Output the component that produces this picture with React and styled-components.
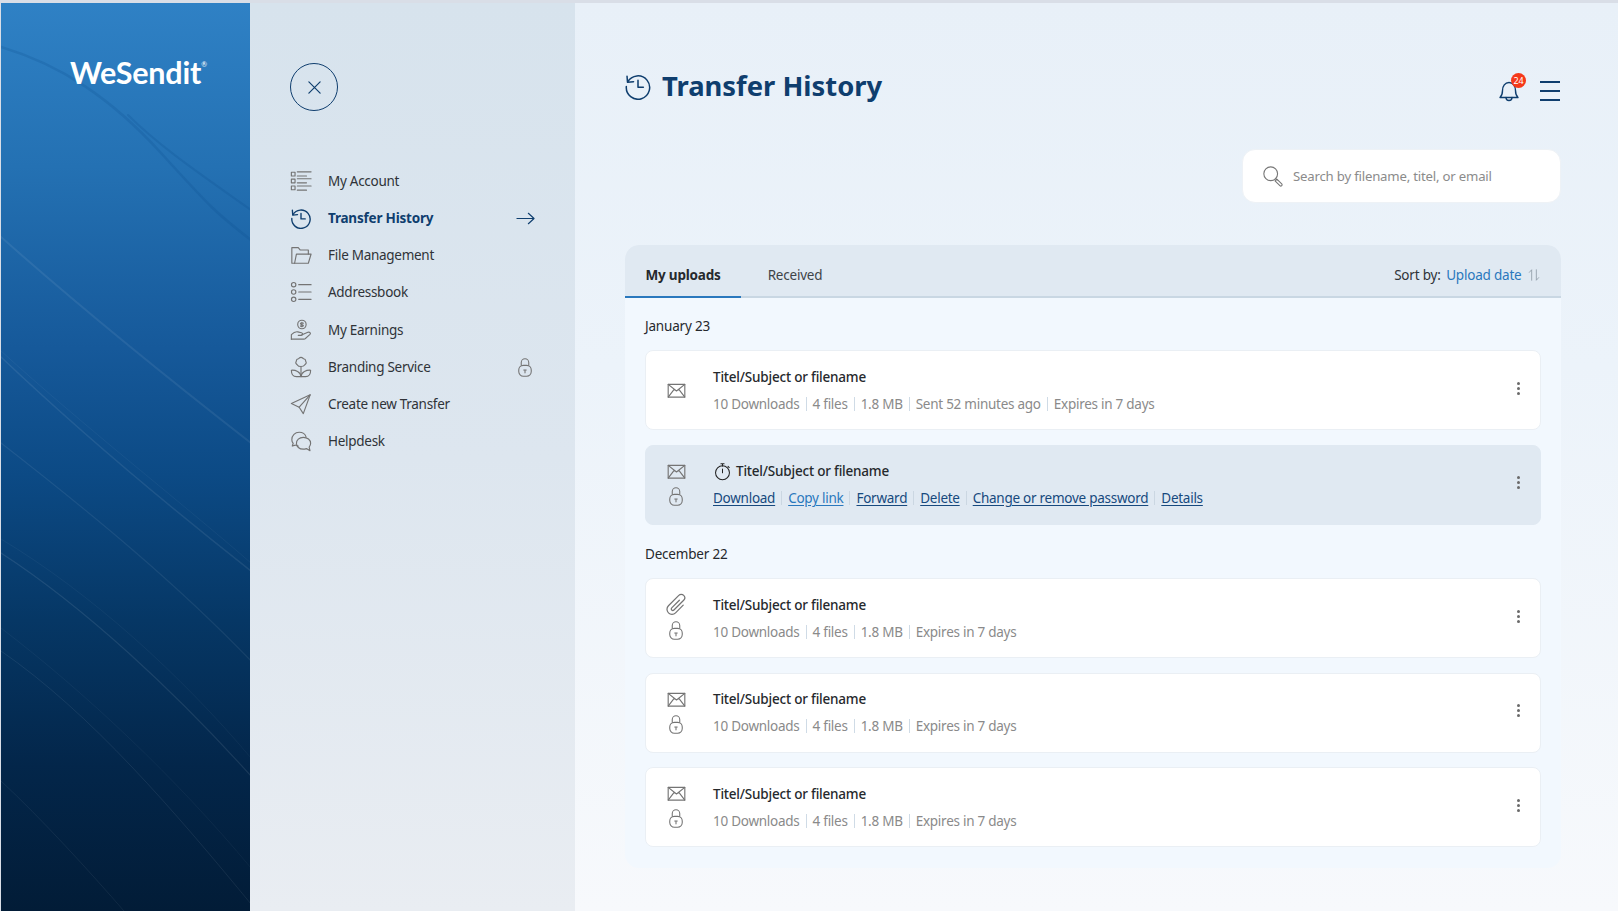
import React from "react";
import styled, { createGlobalStyle } from "styled-components";

const GlobalStyle = createGlobalStyle`
  html, body {
    margin: 0;
    padding: 0;
    height: 100%;
    background: #fff;
  }
  * {
    box-sizing: border-box;
  }
  body {
    font-family: "Noto Sans", "Open Sans", sans-serif;
    overflow: hidden;
  }
`;

const navy = "#0f3e6e";
const gray = "#747474";

const Icon = ({ size = 22, color = gray, width = 1.3, children, viewBox = "0 0 24 24" }) => (
  <svg
    width={size}
    height={size}
    viewBox={viewBox}
    fill="none"
    stroke={color}
    strokeWidth={width}
    strokeLinecap="round"
    strokeLinejoin="round"
  >
    {children}
  </svg>
);

const HistoryIcon = (props) => (
  <Icon {...props}>
    <path d="M3.2 8.500A10 10 0 1 1 2 12.500" />
    <path d="M2.600 3.600 3 8.800l5.200-.5" />
    <path d="M12 7v6h4.600" />
  </Icon>
);

const AccountIcon = (props) => (
  <Icon {...props}>
    <rect x="1.500" y="2.500" width="4" height="4" />
    <rect x="1.500" y="10" width="4" height="4" />
    <rect x="1.500" y="17.500" width="4" height="4" />
    <path d="M8 2h15M8 6.500h10M8 9.500h15M8 14h10M8 17.500h15M8 22h10" />
  </Icon>
);

const FolderIcon = (props) => (
  <Icon {...props}>
    <path d="M5 21H2V4h7l2 2.500h9V11" />
    <path d="M5 21l2-10h16l-3 10z" />
  </Icon>
);

const AddressIcon = (props) => (
  <Icon {...props}>
    <circle cx="4" cy="4" r="2.400" />
    <circle cx="4" cy="12" r="2.400" />
    <circle cx="4" cy="20" r="2.400" />
    <path d="M9.500 4H23M9.500 12H23M9.500 20H23" />
  </Icon>
);

const EarningsIcon = (props) => (
  <Icon {...props}>
    <circle cx="13" cy="6" r="4.600" />
    <path d="M13 3.500v5M14.600 4.600c-1-.8-3.200-.6-3.200.6s3.200.8 3.200 2-2.200 1.200-3.200.4" />
    <path d="M1.500 22v-5c2-2 4.500-3.500 7-3l4 1c1.800.5 1.600 2.800-.4 2.800H9" />
    <path d="M12.500 17.500l7-3c2-.7 3.500 1 2.300 2.300L16.500 21.500c-1 .5-2 .5-3 .5H1.500" />
  </Icon>
);

const BrandingIcon = (props) => (
  <Icon {...props}>
    <path d="M12 1.500c1.500 0 2 1 2.800 1.500 1 .2 2.200.5 2.200 2 0 1 .7 1.500.7 2.300 0 1.200-1.200 1.700-1.700 2.500-.6 1-1.800 1.700-4 1.700s-3.400-.7-4-1.700c-.5-.8-1.700-1.300-1.700-2.500 0-.8.7-1.300.7-2.300 0-1.500 1.200-1.800 2.200-2C9.900 2.500 10.500 1.500 12 1.500z" />
    <path d="M12 12v10" />
    <path d="M12 22.500H7c-3.500 0-5.500-2.500-5.500-7 4.500-.3 10 1.500 10.500 7z" />
    <path d="M12 22.500h5c3.500 0 5.500-2.500 5.500-7-4.500-.3-10 1.500-10.500 7z" />
  </Icon>
);

const SendIcon = (props) => (
  <Icon {...props}>
    <path d="M22 2 1.500 11.500 10 15.500l4.500 7z" />
    <path d="M22 2 10 15.500" />
  </Icon>
);

const HelpIcon = (props) => (
  <Icon {...props}>
    <path d="M9 17.500c-1.200-.2-2.200-.5-3-1l-3.500 1 1-3C2.500 13.500 2 12 2 10.500 2 6 5.500 2.500 10 2.500c3.500 0 6.500 2 7.500 5" />
    <path d="M14.500 8c4.500 0 8 2.800 8 6.500 0 1.600-.6 3-1.600 4.100l.9 3.900-4-2.200c-1 .4-2.100.6-3.300.6-4.400 0-7.500-2.800-7.500-6.400S10 8 14.500 8z" />
  </Icon>
);

const LockIcon = (props) => (
  <Icon {...props}>
    <path d="M7.500 10V6.500a4.500 4.500 0 0 1 9 0V10" />
    <rect x="4.500" y="10" width="15" height="13" rx="5.500" />
    <path d="M12 15.500v3.500M10.500 15.500h3" />
  </Icon>
);

const MailIcon = (props) => (
  <Icon {...props}>
    <rect x="2.500" y="5" width="19" height="14.500" />
    <path d="M2.500 5 12 12.500 21.500 5M2.500 19.500 9.500 10.500M21.500 19.500 14.500 10.500" />
  </Icon>
);

const ClipIcon = (props) => (
  <Icon {...props}>
    <path d="M15 7.500 7 15.500a1.600 1.600 0 0 0 2.300 2.300L19.500 7.600a3.600 3.600 0 0 0-5.100-5.100L3.600 13.300a5.200 5.200 0 0 0 7.400 7.400L19 12.700" />
  </Icon>
);

const TimerIcon = (props) => (
  <Icon {...props}>
    <circle cx="12" cy="13.500" r="8.800" />
    <path d="M10 2.200h4M12 2.200v3M12 9v4.500M19 5.500l1.500 1.500" />
  </Icon>
);

const SearchIcon = (props) => (
  <Icon {...props}>
    <circle cx="9.500" cy="9.500" r="7.500" />
    <path d="M15 15l1.500 1.500" />
    <path d="M16.200 15.300l5.300 5.300a1.400 1.400 0 0 1-2 2l-5.300-5.300z" />
  </Icon>
);

const BellIcon = (props) => (
  <Icon {...props}>
    <path d="M3 18.500c1.500-1.400 2.500-2.800 2.500-7C5.500 7 8 3.500 12 3.500s6.500 3.500 6.500 8c0 4.200 1 5.600 2.500 7z" />
    <path d="M9 18.500a3 3 0 0 0 6 0" />
  </Icon>
);

const SortIcon = (props) => (
  <Icon {...props}>
    <path d="M8 21V3L4 7.500M16 3v18l4-4.500" />
  </Icon>
);

const ArrowIcon = (props) => (
  <Icon {...props} viewBox="0 0 20 20">
    <path d="M1 10h18M13 4.500 19 10l-6 5.500" />
  </Icon>
);

const CloseIcon = (props) => (
  <Icon {...props} viewBox="0 0 16 16">
    <path d="M2 2l12 12M14 2 2 14" />
  </Icon>
);

// lines of the water picture behind the logo
const Waves = () => (
  <WaveLayer viewBox="0 0 249 908" preserveAspectRatio="none">
    <g fill="none" strokeLinecap="round">
      <path d="M0 44C60 62 110 95 160 150S215 210 250 237" stroke="#0a4a8a" strokeOpacity=".2" strokeWidth="2.500" />
      <path d="M127 112C160 145 205 175 250 207" stroke="#0a4a8a" strokeOpacity=".2" strokeWidth="2" />
      <path d="M0 234C80 305 160 370 250 440" stroke="#ffffff" strokeOpacity=".07" strokeWidth="2" />
      <path d="M0 354C80 430 170 505 250 568" stroke="#ffffff" strokeOpacity=".08" strokeWidth="1.500" />
      <path d="M0 348C85 425 175 495 250 560" stroke="#ffffff" strokeOpacity=".04" strokeWidth="1" />
      <path d="M0 440C90 510 175 580 250 658" stroke="#ffffff" strokeOpacity=".07" strokeWidth="1.200" />
      <path d="M0 550C85 605 175 690 250 773" stroke="#ffffff" strokeOpacity=".09" strokeWidth="1.200" />
      <path d="M0 536C90 590 180 672 250 755" stroke="#ffffff" strokeOpacity=".04" strokeWidth="1" />
      <path d="M0 625C85 690 175 775 250 865" stroke="#ffffff" strokeOpacity=".04" strokeWidth="1" />
      <path d="M0 648C90 710 175 810 250 901" stroke="#ffffff" strokeOpacity=".07" strokeWidth="1" />
      <path d="M0 778C40 815 90 870 123 908" stroke="#ffffff" strokeOpacity=".06" strokeWidth="1" />
    </g>
  </WaveLayer>
);

const navItems = [
  { label: "My Account", icon: AccountIcon },
  { label: "Transfer History", icon: HistoryIcon, active: true },
  { label: "File Management", icon: FolderIcon },
  { label: "Addressbook", icon: AddressIcon },
  { label: "My Earnings", icon: EarningsIcon },
  { label: "Branding Service", icon: BrandingIcon, locked: true },
  { label: "Create new Transfer", icon: SendIcon },
  { label: "Helpdesk", icon: HelpIcon },
];

const groups = [
  {
    date: "January 23",
    rows: [
      { kind: "mail", meta: ["10 Downloads", "4 files", "1.8 MB", "Sent 52 minutes ago", "Expires in 7 days"] },
      { kind: "mail", locked: true, open: true },
    ],
  },
  {
    date: "December 22",
    rows: [
      { kind: "clip", locked: true, meta: ["10 Downloads", "4 files", "1.8 MB", "Expires in 7 days"] },
      { kind: "mail", locked: true, meta: ["10 Downloads", "4 files", "1.8 MB", "Expires in 7 days"] },
      { kind: "mail", locked: true, meta: ["10 Downloads", "4 files", "1.8 MB", "Expires in 7 days"] },
    ],
  },
];

const actions = ["Download", "Copy link", "Forward", "Delete", "Change or remove password", "Details"];

const Row = ({ row }) => {
  const KindIcon = row.kind === "clip" ? ClipIcon : MailIcon;
  return (
    <Card $open={row.open}>
      <IconColumn $stacked={row.locked}>
        <KindIcon size={row.kind === "clip" ? 23 : 21} />
        {row.locked && <LockIcon size={20} />}
      </IconColumn>
      <CardBody>
        <CardTitle>
          {row.open && <TimerIcon size={19} color="#222" />}
          Titel/Subject or filename
        </CardTitle>
        {row.open ? (
          <InfoLine>
            {actions.map((a) => (
              <ActionLink key={a} href="#" $light={a === "Copy link"}>
                {a}
              </ActionLink>
            ))}
          </InfoLine>
        ) : (
          <InfoLine>
            {row.meta.map((m) => (
              <MetaItem key={m}>{m}</MetaItem>
            ))}
          </InfoLine>
        )}
      </CardBody>
      <Dots>
        <i />
        <i />
        <i />
      </Dots>
    </Card>
  );
};

export default function App() {
  return (
    <>
      <GlobalStyle />
      <Page>
        <Brand>
          <Waves />
          <Logo>
            WeSendit<sup>®</sup>
          </Logo>
        </Brand>
        <Sidebar>
          <CloseButton>
            <CloseIcon size={15} color={navy} width={1.300} />
          </CloseButton>
          <NavList>
            {navItems.map(({ label, icon: ItemIcon, active, locked }) => (
              <NavItem key={label} $active={active}>
                <ItemIcon size={22} color={active ? navy : gray} width={active ? 1.500 : 1.250} />
                <NavLabel>{label}</NavLabel>
                {active && <ArrowIcon size={19} color={navy} width={1.200} />}
                {locked && <LockIcon size={20} />}
              </NavItem>
            ))}
          </NavList>
        </Sidebar>
        <Main>
          <TopBar>
            <Title>
              <HistoryIcon size={28} color={navy} width={1.300} />
              Transfer History
            </Title>
            <TopActions>
              <BellWrap>
                <BellIcon size={24} color={navy} width={1.400} />
                <Badge>24</Badge>
              </BellWrap>
              <Burger>
                <i />
                <i />
                <i />
              </Burger>
            </TopActions>
          </TopBar>
          <SearchBox>
            <SearchIcon size={22} color="#777" width={1.200} />
            <SearchText>Search by filename, titel, or email</SearchText>
          </SearchBox>
          <Panel>
            <TabBar>
              <Tab $active>My uploads</Tab>
              <Tab>Received</Tab>
              <SortBy>
                Sort by:
                <SortValue>Upload date</SortValue>
                <SortIcon size={14} color="#8e9aa5" width={1.400} />
              </SortBy>
            </TabBar>
            <PanelBody>
              {groups.map((group) => (
                <Group key={group.date}>
                  <GroupDate>{group.date}</GroupDate>
                  {group.rows.map((row, i) => (
                    <Row key={i} row={row} />
                  ))}
                </Group>
              ))}
            </PanelBody>
          </Panel>
        </Main>
      </Page>
    </>
  );
}

const Page = styled.div`
  display: flex;
  height: 911px;
  width: 1618px;
  padding: 3px 0 0 1px;
  background: #d9dee7;
  overflow: hidden;
  font-size: 13.500px;
  letter-spacing: -0.2px;
`;

const Brand = styled.aside`
  position: relative;
  width: 249px;
  flex: none;
  padding: 51px 0 0 69px;
  background: linear-gradient(180deg, #2f81c5 0%, #2471b3 18%, #16599a 38%, #0c4a85 52%, #063765 68%, #03264a 84%, #021c37 100%);
  overflow: hidden;
`;

const WaveLayer = styled.svg`
  position: absolute;
  inset: 0;
  width: 100%;
  height: 100%;
`;

const Logo = styled.div`
  position: relative;
  color: #fff;
  font-family: Lato, "Noto Sans", sans-serif;
  font-weight: 700;
  font-size: 30.500px;
  letter-spacing: -0.2px;
  line-height: 36px;

  sup {
    font-size: 7px;
    font-weight: 400;
    vertical-align: 17px;
    line-height: 0;
  }
`;

const Sidebar = styled.nav`
  width: 325px;
  flex: none;
  padding: 60px 40px 0 40px;
  background: linear-gradient(180deg, #d7e3ed 0%, #dde6ef 50%, #e9edf2 100%);
`;

const CloseButton = styled.button`
  display: flex;
  align-items: center;
  justify-content: center;
  width: 48px;
  height: 48px;
  padding: 0;
  border: 1px solid ${navy};
  border-radius: 50%;
  background: transparent;
`;

const NavList = styled.ul`
  list-style: none;
  margin: 59px 0 0;
  padding: 0;
  display: flex;
  flex-direction: column;
  gap: 15.150px;
`;

const NavItem = styled.li`
  display: flex;
  align-items: center;
  gap: 16px;
  height: 22px;
  font-weight: ${(p) => (p.$active ? 700 : 400)};
  letter-spacing: ${(p) => (p.$active ? "-0.2px" : "-0.28px")};
  color: ${(p) => (p.$active ? navy : "#2f3338")};
`;

const NavLabel = styled.span`
  flex: 1;
`;

const Main = styled.main`
  flex: 1;
  padding: 0 57px 0 50px;
  background: linear-gradient(180deg, #e8f0f8 0%, #ecf3fa 40%, #f7f9fc 100%);
`;

const TopBar = styled.header`
  display: flex;
  align-items: center;
  justify-content: space-between;
  height: 166px;
  padding: 0 1px 0 0;
  margin-bottom: -20px;
`;

const Title = styled.h1`
  display: flex;
  align-items: center;
  gap: 10px;
  margin: 0 0 0 -1px;
  color: ${navy};
  font-size: 27.400px;
  font-weight: 700;
  letter-spacing: 0;
  line-height: 1;
`;

const TopActions = styled.div`
  display: flex;
  align-items: center;
  gap: 19px;
  margin-top: 10px;
`;

const BellWrap = styled.div`
  position: relative;
  display: flex;
`;

const Badge = styled.span`
  position: absolute;
  top: -6px;
  right: -5px;
  width: 15px;
  height: 15px;
  border-radius: 50%;
  background: #f5391a;
  color: #fff;
  font-size: 9px;
  line-height: 15px;
  text-align: center;
`;

const Burger = styled.div`
  display: flex;
  flex-direction: column;
  gap: 7.300px;
  width: 20px;

  i {
    display: block;
    height: 2px;
    background: ${navy};
  }
`;

const SearchBox = styled.div`
  display: flex;
  align-items: center;
  gap: 9px;
  width: 319px;
  height: 53.500px;
  margin: 0 0 42px auto;
  padding: 0 19px;
  background: #fff;
  border: 1px solid #eef2f6;
  border-radius: 13px;
`;

const SearchText = styled.span`
  color: #8b8b8b;
  font-size: 13.200px;
`;

const Panel = styled.section`
  width: 936px;
  height: 623px;
  border-radius: 14px;
  background: #f2f8fe;
  overflow: hidden;
`;

const TabBar = styled.div`
  display: flex;
  align-items: stretch;
  height: 53px;
  background: #e0e9f2;
  border-bottom: 2px solid #c9d7e3;
`;

const Tab = styled.div`
  display: flex;
  align-items: center;
  height: 53px;
  padding: 9px ${(p) => (p.$active ? "20.500px" : "26.500px")} 0;
  font-weight: ${(p) => (p.$active ? 700 : 400)};
  color: ${(p) => (p.$active ? "#26292d" : "#3f4448")};
  border-bottom: 2px solid ${(p) => (p.$active ? "#2a78bd" : "transparent")};
`;

const SortBy = styled.div`
  display: flex;
  align-items: center;
  margin-left: auto;
  padding: 9px 20px 0 0;
  gap: 5.500px;
  color: #2f3338;
`;

const SortValue = styled.span`
  color: #2a78bd;
`;

const PanelBody = styled.div`
  display: flex;
  flex-direction: column;
  gap: 19px;
  padding: 18px 20px 20px;
`;

const Group = styled.div`
  display: flex;
  flex-direction: column;
  gap: 14.500px;
`;

const GroupDate = styled.div`
  line-height: 20px;
  color: #26292d;
`;

const Card = styled.article`
  display: flex;
  align-items: center;
  height: 80px;
  padding: 0 20px 0 19px;
  background: ${(p) => (p.$open ? "#e0e9f2" : "#fff")};
  border: 1px solid ${(p) => (p.$open ? "#e0e9f2" : "#eaeff4")};
  border-radius: 8px;
`;

const IconColumn = styled.div`
  display: flex;
  flex-direction: column;
  align-items: center;
  gap: 4px;
  width: 22px;
  margin-bottom: ${(p) => (p.$stacked ? "3px" : "0")};
`;

const CardBody = styled.div`
  flex: 1;
  display: flex;
  flex-direction: column;
  gap: 6px;
  margin-left: 26px;
`;

const CardTitle = styled.div`
  display: flex;
  align-items: center;
  gap: 4px;
  height: 21px;
  font-weight: 500;
  color: #26292d;
`;

const InfoLine = styled.div`
  display: flex;
  align-items: center;
  height: 21px;
  letter-spacing: -0.26px;
`;

const MetaItem = styled.span`
  color: #8a8a8a;

  & + & {
    margin-left: 6px;
    padding-left: 6px;
    border-left: 1px solid #cfdbe6;
    line-height: 14px;
  }
`;

const ActionLink = styled.a`
  color: ${(p) => (p.$light ? "#2a78bd" : "#17497e")};
  text-decoration: underline;
  text-underline-offset: 2px;

  & + & {
    margin-left: 6px;
    padding-left: 7px;
    background: linear-gradient(#cbd7e2, #cbd7e2) left center / 1px 14px no-repeat;
  }
`;

const Dots = styled.div`
  display: flex;
  flex-direction: column;
  gap: 2px;
  margin-bottom: 4px;

  i {
    display: block;
    width: 3px;
    height: 3px;
    border-radius: 50%;
    background: #6a6a6a;
  }
`;
